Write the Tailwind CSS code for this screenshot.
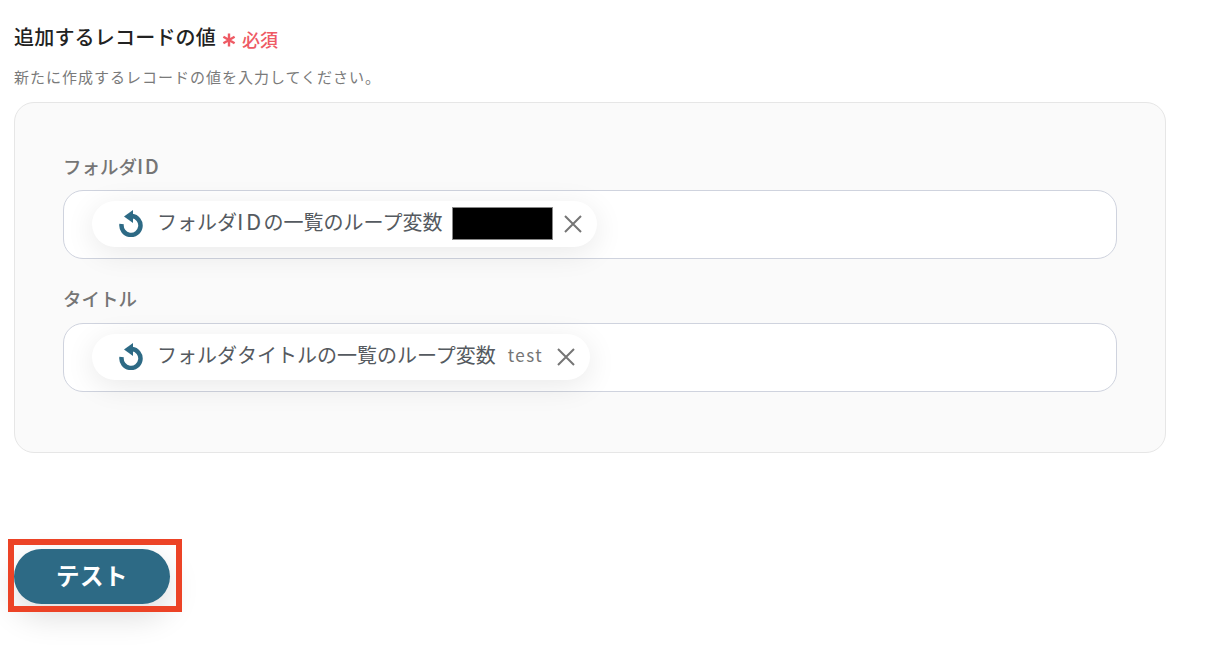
<!DOCTYPE html>
<html lang="ja">
<head>
<meta charset="utf-8">
<script src="https://cdn.jsdelivr.net/npm/@tailwindcss/browser@4"></script>
</head>
<body class="bg-white font-['Noto_Sans_CJK_JP','Noto_Sans',sans-serif] overflow-hidden">
<div class="w-[1210px] h-[658px] flex flex-col pl-[14px] pr-[44px] pt-[23px]">
  <div class="flex items-center h-[28px]">
    <span class="text-[20px] leading-[28px] tracking-[0.2px] font-medium text-[#222222]">追加するレコードの値</span>
    <span class="ml-[5px] mt-[3px] flex items-center text-[#ee5a64] text-[18px] font-medium leading-[24px]">
      <svg class="w-[16px] h-[16px] mr-[5px] mt-[3px]" viewBox="0 0 16 16" fill="none" stroke="#ee5a64" stroke-width="2.4"><path d="M8 1.5v13M2.4 4.8l11.2 6.4M13.6 4.8L2.4 11.2"/></svg>必須</span>
  </div>
  <p class="mt-[15px] text-[15px] leading-[22px] tracking-[1px] text-[#7a7a7a]">新たに作成するレコードの値を入力してください。</p>
  <div class="mt-[14px] w-[1152px] h-[351px] rounded-[20px] border border-[#e6e6e6] bg-[#fafafa] px-[48px] pt-[49px] flex flex-col">
    <div class="text-[18.5px] leading-[28px] font-medium text-[#757575]">フォルダ<span class="text-[20px] leading-none tracking-[1.5px]">ID</span></div>
    <div class="mt-[10px] h-[69px] rounded-[20px] border border-[#cfd3de] bg-white pl-[28px] flex items-center">
      <div class="h-[46px] mb-[2px] rounded-full bg-white shadow-[0_6px_30px_rgba(0,0,0,0.09)] pl-[27px] pr-[14px] flex items-center">
        <svg class="w-[24px] h-[27px] shrink-0" viewBox="0 0 24 27" fill="none"><path d="M13 6A9.5 9.5 0 1 1 2.6 14" stroke="#2d6a85" stroke-width="4.5"/><path d="M14 0v13L5 6.5z" fill="#2d6a85"/></svg>
        <span class="ml-[14px] pb-[4px] text-[20px] leading-[28px] text-[#555a60]">フォルダ<span class="text-[22px] leading-none tracking-[2.5px]">ID</span>の一覧のループ変数</span>
        <span class="ml-[10px] w-[101px] h-[33px] bg-black border border-[#888888]"></span>
        <svg class="ml-[10px] w-[20px] h-[20px]" viewBox="0 0 20 20" fill="none" stroke="#757575" stroke-width="2"><path d="M2 2l16 16M18 2L2 18"/></svg>
      </div>
    </div>
    <div class="mt-[25px] text-[18.5px] leading-[28px] font-medium text-[#757575]">タイトル</div>
    <div class="mt-[11px] h-[69px] rounded-[20px] border border-[#cfd3de] bg-white pl-[28px] flex items-center">
      <div class="h-[46px] mb-[2px] rounded-full bg-white shadow-[0_6px_30px_rgba(0,0,0,0.09)] pl-[27px] pr-[14px] flex items-center">
        <svg class="w-[24px] h-[27px] shrink-0" viewBox="0 0 24 27" fill="none"><path d="M13 6A9.5 9.5 0 1 1 2.6 14" stroke="#2d6a85" stroke-width="4.5"/><path d="M14 0v13L5 6.5z" fill="#2d6a85"/></svg>
        <span class="ml-[14px] pb-[4px] text-[20px] leading-[28px] text-[#555a60]">フォルダタイトルの一覧のループ変数</span>
        <span class="ml-[12px] pb-[3px] text-[17px] leading-[28px] tracking-[1.4px] text-[#757575]">test</span>
        <svg class="ml-[13px] w-[20px] h-[20px]" viewBox="0 0 20 20" fill="none" stroke="#757575" stroke-width="2"><path d="M2 2l16 16M18 2L2 18"/></svg>
      </div>
    </div>
  </div>
  <div class="relative mt-[96px] w-[156px] h-[55px]">
    <button class="w-[156px] h-[55px] pb-[2px] rounded-full bg-[#2d6a85] text-white text-[23.5px] font-bold tracking-[0.5px] shadow-[0_12px_32px_rgba(0,0,0,0.14)] flex items-center justify-center">テスト</button>
    <div class="absolute -left-[6px] -top-[10px] w-[174px] h-[73px] border-[6px] border-[#ec4326]"></div>
  </div>
</div>
</body>
</html>
